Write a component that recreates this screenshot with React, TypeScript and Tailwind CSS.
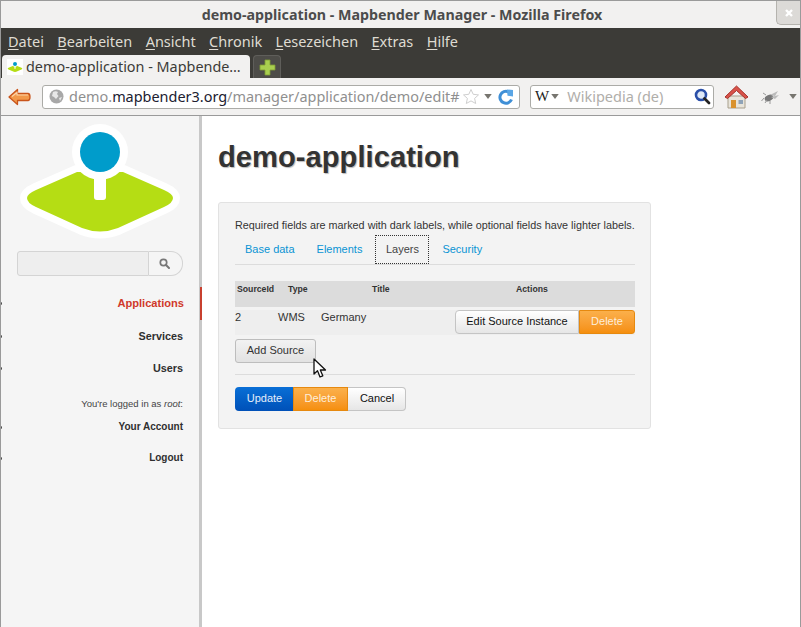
import React from "react";

const Tri = ({ className = "" }: { className?: string }) => (
  <svg width="8" height="5" viewBox="0 0 9 6" className={className}><path d="M0 0H9L4.5 6Z" fill="#77756f" /></svg>
);

const Logo = ({ size, h }: { size: number; h: number }) => (
  <svg width={size} height={h} viewBox="20 122 160 120">
    <path d="M77 172L36 190Q27 194 27 198Q27 203 36 207L82 228Q100 235 118 228L164 207Q173 203 173 198Q173 194 164 190L123 172Z" fill="#b5dd14" stroke="#fff" strokeWidth="14" strokeLinejoin="round" />
    <path d="M77 172L36 190Q27 194 27 198Q27 203 36 207L82 228Q100 235 118 228L164 207Q173 203 173 198Q173 194 164 190L123 172Z" fill="#b5dd14" />
    <rect x="94" y="170" width="12" height="30" rx="3" fill="#fff" />
    <circle cx="100" cy="152" r="28" fill="#fff" />
    <circle cx="100" cy="152" r="20" fill="#009ccb" />
  </svg>
);

const Nav = ({ label, active, className = "" }: { label: string; active?: boolean; className?: string }) => (
  <div className={`flex items-center justify-between font-bold leading-[14px] ${active ? "text-[#d0392b] pr-[15px]" : "text-[#2f2f2f] pr-[16px]"} ${className}`}>
    <span className="w-[3px] h-[3px] rounded-full bg-[#444] -ml-[2px]" />
    <span>{label}</span>
  </div>
);

const M = ({ first, rest }: { first: string; rest: string }) => (
  <span><span className="underline underline-offset-2">{first}</span>{rest}</span>
);

export default function App() {
  return (
    <div className="w-[801px] h-[627px] relative overflow-hidden flex flex-col bg-white border-t border-l border-r border-[#9a9a9a] font-['Liberation_Sans',sans-serif]">
      {/* title bar */}
      <div className="h-[27px] shrink-0 bg-[#f2f1f0] relative flex items-center justify-center pl-[3px] font-['Noto_Sans',sans-serif] font-bold text-[14.25px] text-[#4c4c4c]">
        demo-application - Mapbender Manager - Mozilla Firefox
        <div className="absolute right-0 top-0 w-[24px] h-[24px] bg-[#dcdad7] border-l border-b border-[#b5b3ae] rounded-bl-[5px] flex items-center justify-center">
          <svg width="10" height="10" viewBox="0 0 10 10"><path d="M2 2L8 8M8 2L2 8" stroke="#fff" strokeWidth="2.4" /></svg>
        </div>
      </div>
      {/* menu */}
      <div className="h-[50px] shrink-0 bg-[#3c3b37] flex flex-col justify-between">
        <div className="h-[27px] flex items-center pl-[7px] gap-[13.4px] text-[14.5px] text-[#dfdbd2] font-['Noto_Sans',sans-serif]">
          <M first="D" rest="atei" />
          <M first="B" rest="earbeiten" />
          <M first="A" rest="nsicht" />
          <M first="C" rest="hronik" />
          <M first="L" rest="esezeichen" />
          <M first="E" rest="xtras" />
          <M first="H" rest="ilfe" />
        </div>
        <div className="h-[23px] flex items-end pl-[1px] gap-[3px]">
          <div className="w-[248px] h-[23px] bg-[#f2f1f0] rounded-t-[4px] flex items-center pl-[5px] gap-[3px] text-[14.4px] text-[#3c3b37] font-['Noto_Sans',sans-serif] whitespace-nowrap overflow-hidden">
            <div className="w-[16px] h-[16px] bg-white flex items-center justify-center shrink-0"><Logo size={16} h={12} /></div>
            <span>demo-application - Mapbende…</span>
          </div>
          <div className="w-[28px] h-[23px] bg-[#4d4c48] border border-b-0 border-[#5f5e5a] rounded-t-[4px] flex items-center justify-center">
            <svg width="17" height="17" viewBox="0 0 17 17"><path d="M6 1H11V6H16V11H11V16H6V11H1V6H6Z" fill="#a9cf4f" stroke="#7d9c33" strokeWidth="0.8" /></svg>
          </div>
        </div>
      </div>
      {/* nav bar */}
      <div className="h-[38px] shrink-0 bg-[#f2f1f0] border-b border-[#9a9a9a] flex items-center pl-[7px] pr-[3px]">
        <svg width="23" height="18" viewBox="0 0 23 18" className="shrink-0">
          <path d="M1 9L9.5 1.5V5.5H20Q22 5.5 22 9Q22 12.5 20 12.5H9.5V16.5Z" fill="#f2994a" stroke="#c9541a" strokeWidth="1.3" strokeLinejoin="round" />
          <path d="M4 8.5L9 4.5V7H20" fill="none" stroke="#fbd3a8" strokeWidth="1.2" />
        </svg>
        <div className="ml-[11px] w-[478px] h-[24px] bg-white border border-[#ababa7] rounded-[3px] flex items-center pl-[6px] pr-[5px] shrink-0 font-['Noto_Sans',sans-serif] text-[14.45px] text-[#8f8f8f] whitespace-nowrap">
          <svg width="15" height="15" viewBox="0 0 15 15" className="shrink-0"><circle cx="7.5" cy="7.5" r="7" fill="#a8a8a8" /><path d="M4 3Q7 1.500 9 3L8 5L9.500 7L7 10L5 8L3 7Z M10 9L13 8L11 12Z" fill="#e8e8e8" /></svg>
          <span className="ml-[5px] flex-1 overflow-hidden">demo.<span className="text-[#202030]">mapbender3.org</span>/manager/application/demo/edit#</span>
          <svg width="18" height="17" viewBox="0 0 18 17" className="shrink-0"><path d="M9 1.500L11.200 6.300L16.500 6.900L12.600 10.400L13.700 15.500L9 12.900L4.300 15.500L5.400 10.400L1.500 6.900L6.800 6.300Z" fill="#fff" stroke="#cfcfcf" /></svg>
          <Tri className="ml-[4px] shrink-0" />
          <svg width="16" height="16" viewBox="0 0 16 16" className="ml-[6px] shrink-0">
            <path d="M13.500 10.500A6 6 0 1 1 10.500 2.800" fill="none" stroke="#3f8fd6" strokeWidth="3" />
            <path d="M9 0.500L15 1V7.500L9.500 6.800Z" fill="#5aa6e6" />
          </svg>
        </div>
        <div className="ml-[10px] w-[184px] h-[24px] bg-white border border-[#ababa7] rounded-[3px] flex items-center pl-[4px] pr-[2px] shrink-0 font-['Noto_Sans',sans-serif] text-[14.5px] text-[#b0aeaa] whitespace-nowrap">
          <span className="font-['Liberation_Serif',serif] text-[15px] text-[#222] leading-none">W</span>
          <Tri className="ml-[2px] shrink-0" />
          <span className="ml-[8px] flex-1">Wikipedia (de)</span>
          <svg width="17" height="17" viewBox="0 0 17 17" className="shrink-0"><circle cx="7" cy="7" r="5" fill="#dfe9f7" stroke="#2a4fa8" strokeWidth="2.600" /><path d="M10.500 10.500L15 15" stroke="#222" strokeWidth="2.800" strokeLinecap="round" /></svg>
        </div>
        <svg width="25" height="24" viewBox="0 0 25 24" className="ml-[10px] shrink-0">
          <path d="M4 11H21V23H4Z" fill="#e8e4da" stroke="#a89f8c" />
          <path d="M1 12L12.500 1L24 12L21.500 13.500L12.500 5.500L3.500 13.500Z" fill="#d9534a" stroke="#a6322a" strokeLinejoin="round" />
          <rect x="7" y="15" width="5" height="8" fill="#d9922e" />
          <rect x="14.500" y="15" width="4.500" height="4" fill="#8fa3b8" />
        </svg>
        <svg width="18" height="14" viewBox="0 0 18 14" className="ml-[12px] shrink-0">
          <ellipse cx="8" cy="8" rx="4.500" ry="3" fill="#777" transform="rotate(-25 8 8)" />
          <path d="M3 8L0.500 11M6 10L4 13M9 11L9 14M5 5L2 3" stroke="#999" strokeWidth="1" />
          <path d="M9 5L17 1L14 6ZM10 7L18 5L14 9Z" fill="#bbb" />
        </svg>
        <Tri className="ml-[10px] shrink-0" />
      </div>
      {/* page */}
      <div className="flex-1 flex min-h-0">
        <aside className="w-[198px] shrink-0 bg-[#f5f5f5] flex flex-col relative">
          <div className="pl-[19px] pt-[6px]"><Logo size={160} h={120} /></div>
          <div className="ml-[16px] mt-[9px] flex w-[166px] h-[25px]">
            <div className="w-[132px] bg-[#eeeeee] border border-[#d4d4d4] rounded-l-[3px]" />
            <div className="flex-1 border border-l-0 border-[#d4d4d4] rounded-r-[12px] flex items-center justify-center pr-[3px]">
              <svg width="11" height="11" viewBox="0 0 11 11"><circle cx="4.500" cy="4.500" r="3.200" fill="none" stroke="#777" strokeWidth="1.700" /><path d="M7 7L10 10" stroke="#777" strokeWidth="2" strokeLinecap="round" /></svg>
            </div>
          </div>
          <Nav label="Applications" active className="mt-[20px] text-[11.100px]" />
          <Nav label="Services" className="mt-[19px] text-[10.800px]" />
          <Nav label="Users" className="mt-[18px] text-[10.800px]" />
          <div className="mt-[23px] pr-[16px] text-right text-[9.500px] leading-[12px] text-[#444]">You're logged in as <i>root</i>:</div>
          <Nav label="Your Account" className="mt-[10px] text-[10px]" />
          <Nav label="Logout" className="mt-[17px] text-[10px]" />
        </aside>
        <div className="w-[3px] shrink-0 bg-[#c8c8c8]">
          <div className="h-[33px] w-[3px] ml-[1px] mt-[171px] bg-[#c8402f]" />
        </div>
        <main className="flex-1 bg-white pl-[16px] pr-[149px]">
          <h1 className="mt-[24px] text-[29.2px] leading-[34px] font-bold text-[#333] [text-shadow:1px_1px_1px_#bbb]">demo-application</h1>
          <section className="mt-[28px] h-[227px] w-[433px] bg-[#f3f3f3] border border-[#e2e2e2] rounded-[3px] pl-[16px] pr-[15px] pt-[15px]">
            <p className="text-[10.800px] leading-[14px] text-[#333] whitespace-nowrap">Required fields are marked with dark labels, while optional fields have lighter labels.</p>
            <div className="mt-[3px] h-[30px] border-b border-[#dcdcdc] flex text-[11px] text-[#0a93d3] relative">
              <span className="ml-[10px] mt-[6px]">Base data</span>
              <span className="ml-[22px] mt-[6px]">Elements</span>
              <span className="ml-[13px] w-[54px] h-[29px] border border-dotted border-[#333] text-[#444] flex items-center justify-center text-[11px]">Layers</span>
              <span className="ml-[13px] mt-[6px]">Security</span>
            </div>
            <div className="mt-[16px] h-[26px] bg-[#dcdcdc] relative text-[8.700px] font-bold text-[#333] leading-[10px] flex pt-[3px]">
              <span className="ml-[2px] w-[51px]">SourceId</span>
              <span className="w-[84px]">Type</span>
              <span className="w-[144px]">Title</span>
              <span>Actions</span>
            </div>
            <div className="mt-[3px] h-[25px] bg-[#eeeeee] flex text-[11px] leading-[14px] text-[#333]">
              <span className="w-[43px]">2</span>
              <span className="w-[43px]">WMS</span>
              <span className="w-[134px]">Germany</span>
              <div className="flex h-[24px] text-[11px]">
                <span className="w-[124px] pb-[2px] flex items-center justify-center bg-gradient-to-b from-white to-[#e6e6e6] border border-[#c4c4c4] rounded-l-[4px] text-[#111]">Edit Source Instance</span>
                <span className="w-[56px] pb-[2px] flex items-center justify-center bg-gradient-to-b from-[#fbb04a] to-[#f58f0c] border border-[#e6890f] rounded-r-[3px] text-[#fdeedb]">Delete</span>
              </div>
            </div>
            <div className="mt-[4px] w-[81px] h-[24px] pb-[2px] flex items-center justify-center bg-gradient-to-b from-[#f2f2f2] to-[#e2e2e2] border border-[#bdbdbd] rounded-[3px] text-[11px] text-[#333]">Add Source</div>
            <div className="mt-[11px] border-t border-[#dcdcdc]" />
            <div className="mt-[12px] flex h-[24px] text-[11px]">
              <span className="w-[58px] pb-[2px] pl-[1px] flex items-center justify-center bg-gradient-to-b from-[#0a6fd6] to-[#0050b8] rounded-l-[4px] text-[#e4eefa]">Update</span>
              <span className="w-[55px] pb-[2px] flex items-center justify-center bg-gradient-to-b from-[#fbb04a] to-[#f58f0c] border border-[#e6890f] text-[#fdeedb]">Delete</span>
              <span className="w-[58px] pb-[2px] pl-[1px] flex items-center justify-center bg-gradient-to-b from-white to-[#e6e6e6] border border-l-0 border-[#c4c4c4] rounded-r-[4px] text-[#111]">Cancel</span>
            </div>
          </section>
        </main>
      </div>
      {/* cursor */}
      <svg width="15" height="21" viewBox="0 0 15 21" className="absolute left-[312px] top-[357px]">
        <path d="M1 1V16L4.500 12.800L7 19L9.800 17.800L7.300 12H12.500Z" fill="#fff" stroke="#111" strokeWidth="1.300" strokeLinejoin="round" />
      </svg>
    </div>
  );
}
